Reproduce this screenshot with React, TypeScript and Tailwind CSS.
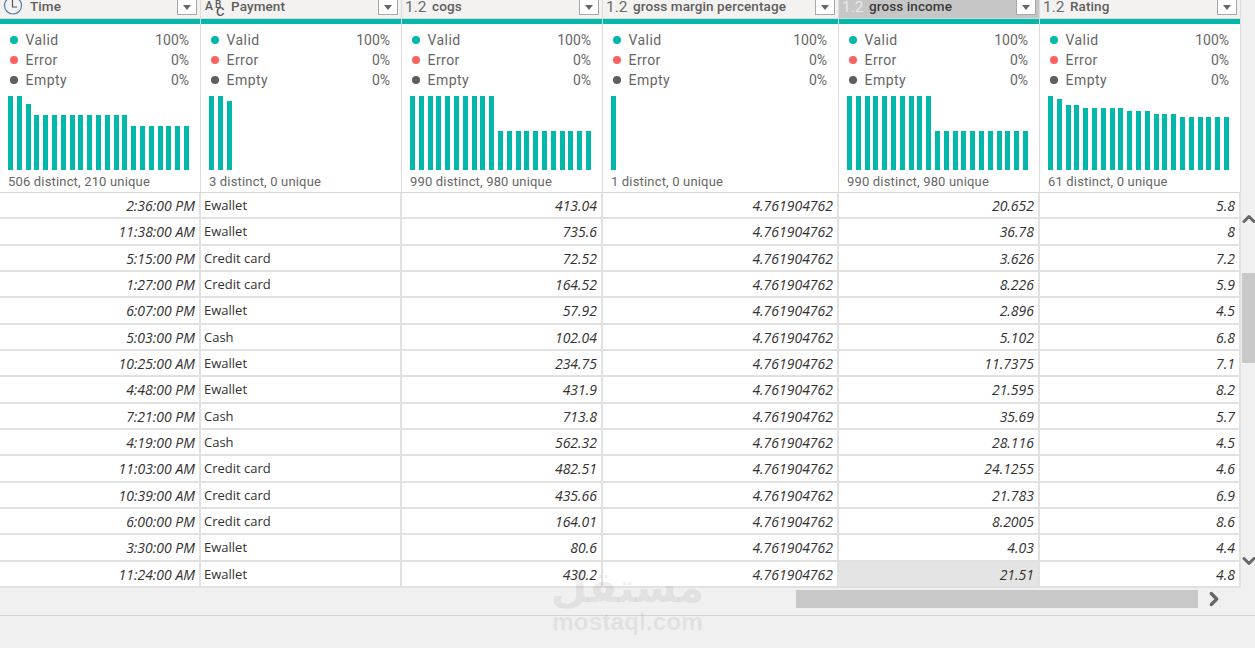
import { ChevronDown, ChevronRight, ChevronUp } from "lucide-react";

type Column = {
  name: string;
  kind: "time" | "abc" | "num";
  width: string;
  stats: string;
  bars: number[];
  selected?: boolean;
};

const repeat = (h: number, n: number) => Array.from({ length: n }, () => h);

const splitBars = [...repeat(74, 10), ...repeat(39, 11)];

const columns: Column[] = [
  {
    name: "Time",
    kind: "time",
    width: "w-[201px]",
    stats: "506 distinct, 210 unique",
    bars: [74, 74, 66, ...repeat(55, 11), ...repeat(44, 7)],
  },
  {
    name: "Payment",
    kind: "abc",
    width: "w-[201px]",
    stats: "3 distinct, 0 unique",
    bars: [74, 74, 69],
  },
  {
    name: "cogs",
    kind: "num",
    width: "w-[201px]",
    stats: "990 distinct, 980 unique",
    bars: splitBars,
  },
  {
    name: "gross margin percentage",
    kind: "num",
    width: "w-[236px]",
    stats: "1 distinct, 0 unique",
    bars: [74],
  },
  {
    name: "gross income",
    kind: "num",
    width: "w-[201px]",
    stats: "990 distinct, 980 unique",
    bars: splitBars,
    selected: true,
  },
  {
    name: "Rating",
    kind: "num",
    width: "w-[201px]",
    stats: "61 distinct, 0 unique",
    bars: [74, 71, 65, 65, ...repeat(62, 5), ...repeat(59, 3), ...repeat(56, 3), ...repeat(53, 6)],
  },
];

const rows = [
  ["2:36:00 PM", "Ewallet", "413.04", "4.761904762", "20.652", "5.8"],
  ["11:38:00 AM", "Ewallet", "735.6", "4.761904762", "36.78", "8"],
  ["5:15:00 PM", "Credit card", "72.52", "4.761904762", "3.626", "7.2"],
  ["1:27:00 PM", "Credit card", "164.52", "4.761904762", "8.226", "5.9"],
  ["6:07:00 PM", "Ewallet", "57.92", "4.761904762", "2.896", "4.5"],
  ["5:03:00 PM", "Cash", "102.04", "4.761904762", "5.102", "6.8"],
  ["10:25:00 AM", "Ewallet", "234.75", "4.761904762", "11.7375", "7.1"],
  ["4:48:00 PM", "Ewallet", "431.9", "4.761904762", "21.595", "8.2"],
  ["7:21:00 PM", "Cash", "713.8", "4.761904762", "35.69", "5.7"],
  ["4:19:00 PM", "Cash", "562.32", "4.761904762", "28.116", "4.5"],
  ["11:03:00 AM", "Credit card", "482.51", "4.761904762", "24.1255", "4.6"],
  ["10:39:00 AM", "Credit card", "435.66", "4.761904762", "21.783", "6.9"],
  ["6:00:00 PM", "Credit card", "164.01", "4.761904762", "8.2005", "8.6"],
  ["3:30:00 PM", "Ewallet", "80.6", "4.761904762", "4.03", "4.4"],
  ["11:24:00 AM", "Ewallet", "430.2", "4.761904762", "21.51", "4.8"],
];

function TypeIcon({ kind, selected }: { kind: Column["kind"]; selected?: boolean }) {
  if (kind === "time") {
    return (
      <svg width="24" height="18" viewBox="0 0 24 18" fill="none" stroke="#4f7cb0" strokeWidth="1.2" className="shrink-0">
        <circle cx="13" cy="5.5" r="8.5" />
        <path d="M12.5 0V7H17" stroke="#555" />
      </svg>
    );
  }
  if (kind === "abc") {
    return (
      <span className="relative ml-[4px] block h-[18px] w-[21px] shrink-0 font-medium leading-none text-[#5a5a5a]">
        <span className="absolute left-0 top-0 text-[12px]">A</span>
        <span className="absolute left-[10px] top-0 text-[10px]">B</span>
        <span className="absolute left-[11px] top-[5px] text-[13px]">C</span>
      </span>
    );
  }
  return (
    <span className={`ml-[3px] w-[22px] shrink-0 text-[15.5px] leading-[14px] ${selected ? "text-[#e8e8e8]" : "text-[#6b6b6b]"}`}>
      1.2
    </span>
  );
}

function HeaderCell({ col }: { col: Column }) {
  return (
    <div className={`${col.width} flex h-[18px] shrink-0 items-start border-r border-[#dcdcdc] ${col.selected ? "bg-[#c6c6c6]" : "bg-[#f3f2f1]"}`}>
      <TypeIcon kind={col.kind} selected={col.selected} />
      <span
        className={`flex-1 whitespace-nowrap text-[13.5px] font-medium leading-[13px] tracking-[0.1px] ${
          col.kind === "time" ? "ml-[6px]" : "ml-[5px]"
        } ${col.selected ? "text-[#3a3a3a]" : "text-[#605e5c]"}`}
      >
        {col.name}
      </span>
      <span className="mr-[3px] flex h-[15px] w-[20px] shrink-0 items-center justify-center border border-t-0 border-[#a8a8a8] bg-white">
        <span className="h-0 w-0 border-x-[4px] border-t-[5px] border-x-transparent border-t-[#666]" />
      </span>
    </div>
  );
}

function ProfileCell({ col }: { col: Column }) {
  const legend = [
    ["Valid", "100%", "bg-[#01b8aa]"],
    ["Error", "0%", "bg-[#fd625e]"],
    ["Empty", "0%", "bg-[#605e5c]"],
  ];
  return (
    <div className={`${col.width} h-[173px] shrink-0 border-r border-[#dcdcdc] bg-white`}>
      <div className="h-[5px] bg-[#01b8aa]" />
      <div className="px-[8px] pr-[11px]">
        <div className="pt-[6px]">
          {legend.map(([label, pct, dot]) => (
            <div key={label} className="flex h-[20px] items-center text-[14px] leading-none text-[#666]">
              <span className={`ml-[2px] h-[8px] w-[8px] rounded-full ${dot}`} />
              <span className="ml-[7.5px] flex-1 tracking-[0.45px]">{label}</span>
              <span>{pct}</span>
            </div>
          ))}
        </div>
        <div className="mt-[6px] flex h-[74px] w-[181px] items-end justify-between">
          {col.bars.map((h, i) => (
            <div key={i} className="w-[5px] bg-[#01b8aa]" style={{ height: h }} />
          ))}
          {col.bars.length < 21 &&
            repeat(0, 21 - col.bars.length).map((_, i) => <div key={i} className="w-[5px]" />)}
        </div>
        <div className="mt-[5px] text-[13px] leading-none tracking-[0.17px] text-[#666]">{col.stats}</div>
      </div>
    </div>
  );
}

export default function App() {
  return (
    <div className="relative flex h-[648px] w-[1255px] flex-col overflow-hidden bg-[#f0f0f0] font-['Roboto',sans-serif]">
      <div className="flex">
        <div className="shrink-0">
          <div className="flex bg-[#f3f2f1]">
            {columns.map((c) => (
              <HeaderCell key={c.name} col={c} />
            ))}
          </div>
          <div className="h-px bg-[#d8d8d8]" />
          <div className="flex border-b border-[#d8d8d8]">
            {columns.map((c) => (
              <ProfileCell key={c.name} col={c} />
            ))}
          </div>

          <div className="font-['Open_Sans',sans-serif] text-[13px] text-[#323130]">
            {rows.map((row, r) => (
              <div key={r} className="flex h-[26.33px] border-b-2 border-[#e1e1e1] bg-white">
                {row.map((val, c) => {
                  const isText = c === 1;
                  const hit = r === rows.length - 1 && c === 4;
                  return (
                    <div
                      key={c}
                      className={`${columns[c].width} flex shrink-0 items-center border-r-2 border-[#e1e1e1] ${
                        isText ? "justify-start pl-[3px] pt-[1.5px]" : "justify-end pr-[4px] pt-[0.5px] text-[14px] italic"
                      } ${hit ? "bg-[#e4e4e4]" : ""}`}
                    >
                      {val}
                    </div>
                  );
                })}
              </div>
            ))}
          </div>
        </div>

        {/* vertical scrollbar */}
        <div className="flex w-[14px] shrink-0 flex-col items-center pl-[1px] pt-[209px] text-[#666]">
          <ChevronUp size={20} strokeWidth={3.5} className="shrink-0" />
          <div className="mt-[44px] h-[90px] w-[13px] bg-[#c8c8c8]" />
          <ChevronDown size={20} strokeWidth={3.5} className="mt-[188px] shrink-0" />
        </div>
      </div>

      {/* horizontal scrollbar */}
      <div className="flex h-[28px] items-start border-b border-[#d4d4d4] pl-[796px] pt-[2px] text-[#666]">
        <div className="h-[18px] w-[402px] bg-[#c8c8c8]" />
        <ChevronRight size={22} strokeWidth={3.5} className="-mt-[2px] ml-[5px]" />
      </div>

      {/* watermark */}
      <div className="absolute left-[552px] top-[566px] flex w-[151px] flex-col items-center text-black/[0.08]">
        <span dir="rtl" className="font-['DejaVu_Sans',sans-serif] text-[42px] font-bold leading-[43px]">
          مستقل
        </span>
        <span className="font-['Liberation_Sans',sans-serif] text-[24.5px] font-bold leading-[26px]">mostaql.com</span>
      </div>
    </div>
  );
}
